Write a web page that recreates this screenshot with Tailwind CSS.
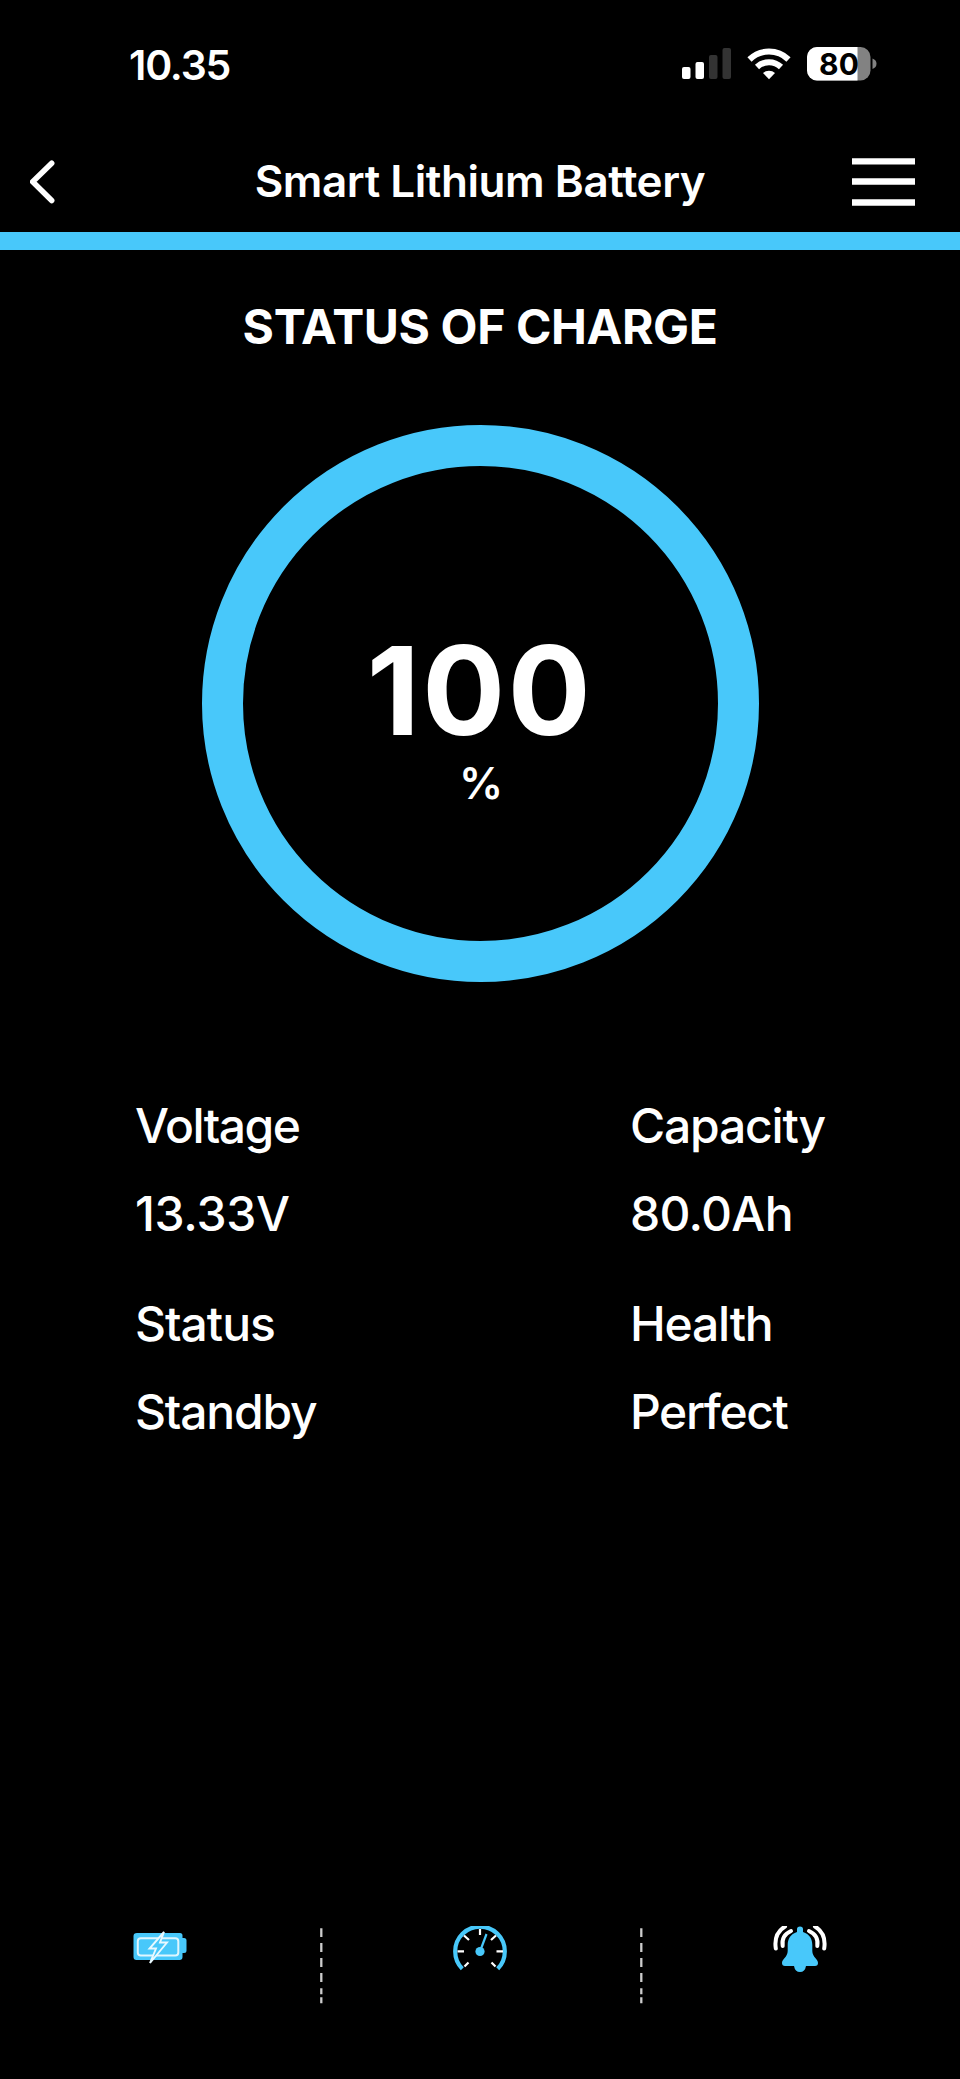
<!DOCTYPE html>
<html lang="en">
<head>
    <meta charset="UTF-8">
    <meta name="viewport" content="width=device-width, initial-scale=1.0">
    <title>Smart Lithium Battery</title>
    <!-- Tailwind CSS CDN -->
    <script src="https://cdn.jsdelivr.net/npm/@tailwindcss/browser@4"></script>
</head>
<body class="bg-black text-white font-['Inter',sans-serif]">
    <div class="flex flex-col w-[960px] h-[2079px] overflow-hidden">
        <!-- Status bar -->
        <div class="flex items-center justify-between h-32 pl-[129px] pr-[83px]">
            <span class="mt-0.5 text-[41px] leading-none font-semibold tracking-[-1.2px]">10.35</span>
            <div class="flex items-center">
                <svg class="w-[195px] h-9" viewBox="0 0 195 36">
                    <!-- Signal -->
                    <rect x="0" y="21" width="8.5" height="12" rx="2" fill="#fff"/>
                    <rect x="13.5" y="16" width="8.5" height="17" rx="2" fill="#fff"/>
                    <rect x="27" y="9" width="8.5" height="24" rx="2" fill="#333"/>
                    <rect x="40.5" y="2" width="8.5" height="31" rx="2" fill="#333"/>
                    <!-- Wifi -->
                    <g fill="none" stroke="#fff" stroke-width="6">
                        <path d="M67.5 13.5A28 28 0 0 1 106.5 13.5"/>
                        <path d="M75 21A17.5 17.5 0 0 1 99 21"/>
                    </g>
                    <path d="M81 27A9 9 0 0 1 93 27L87 33.3Z" fill="#fff"/>
                    <!-- Battery -->
                    <clipPath id="level"><rect x="125" y="1" width="63.5" height="33.5" rx="10"/></clipPath>
                    <g clip-path="url(#level)">
                        <rect x="125" y="0" width="65" height="36" fill="#828282"/>
                        <rect x="125" y="0" width="50.5" height="36" fill="#fff"/>
                    </g>
                    <path d="M190.5 12.5q4 1.5 4 5.2t-4 5.2Z" fill="#828282"/>
                    <text x="157" y="28.8" text-anchor="middle" font-size="30" font-weight="700" fill="#000">80</text>
                </svg>
            </div>
        </div>
        <!-- Header -->
        <header class="flex items-center justify-between h-[104px] pl-[30px] pr-[43px]">
            <svg class="w-[72px] h-11 mt-1" viewBox="0 0 72 44">
                <path d="M21.7 3.2L2.7 21.8L21.7 40.5" fill="none" stroke="#fff" stroke-width="5.5" stroke-linecap="round" stroke-linejoin="round"/>
            </svg>
            <h1 class="mt-0.5 ml-1.5 text-[44px] leading-none font-semibold tracking-[-0.45px] whitespace-nowrap">Smart Lithium Battery</h1>
            <svg class="w-[65px] h-12 mt-1" viewBox="0 0 65 48">
                <path d="M0 3.3H63M0 23.5H63M0 44.5H63" stroke="#fff" stroke-width="6.3"/>
            </svg>
        </header>
        <div class="h-[18px] bg-[#48c8fa]"></div>

        <main class="flex flex-col items-center">
            <h2 class="mt-[47px] text-[48px] leading-[60px] font-bold tracking-[-0.4px] whitespace-nowrap">STATUS OF CHARGE</h2>
            <!-- Charge level -->
            <div class="mt-[68px] size-[557px] rounded-full border-[41px] border-[#48c8fa] flex flex-col items-center pt-[164px]">
                <span class="text-[123px] leading-[122px] font-bold tracking-[2.5px]">100</span>
                <span class="mt-[3px] pl-0.5 text-[44px] leading-[56px] font-semibold">%</span>
            </div>
            <!-- Readings -->
            <dl class="mt-[100px] w-full pl-[135px] grid grid-cols-[495px_1fr] gap-y-[22px] text-[48px] leading-[88px] font-medium tracking-[-1.2px]">
                <div>
                    <dt class="tracking-[-1.5px]">Voltage</dt>
                    <dd class="tracking-[-0.3px]">13.33V</dd>
                </div>
                <div>
                    <dt>Capacity</dt>
                    <dd class="tracking-[-0.7px]">80.0Ah</dd>
                </div>
                <div>
                    <dt class="tracking-[-1px]">Status</dt>
                    <dd>Standby</dd>
                </div>
                <div>
                    <dt>Health</dt>
                    <dd class="tracking-[-1.4px]">Perfect</dd>
                </div>
            </dl>
        </main>

        <!-- Bottom tabs -->
        <nav class="mt-auto h-[153px] grid grid-cols-[320px_3px_317px_3px_317px]">
            <a class="flex justify-center pr-px" href="#">
                <svg class="w-[54px] h-12" viewBox="0 0 54 48">
                    <path d="M4 7h43q2.500 0 2.500 2.500V12h1.500q2.500 0 2.500 2.500v10q0 2.500-2.500 2.500h-1.500v4q0 3-3 3H3.500q-3 0-3-3V10q0-3 3.500-3Z" fill="#48c8fa"/>
                    <rect x="4.8" y="12.2" width="40.5" height="17.3" rx="3" fill="none" stroke="#dff6fe" stroke-width="2"/>
                    <path d="M31 6L16.5 22.5h6.500L17 37L34 16.500h-7Z" fill="#48c8fa" stroke="#e8f9ff" stroke-width="1.9"/>
                </svg>
            </a>
            <svg class="w-[3px] h-20" viewBox="0 0 3 80">
                <path d="M1.3 2.3v8.7M1.3 17v9M1.3 32v9M1.3 47v9M1.3 62.300v6M1.3 71.300v6" stroke="#ccc" stroke-width="2.3"/>
            </svg>
            <a class="flex justify-center pr-[3px]" href="#">
                <svg class="w-[54px] h-12" viewBox="0 0 54 48">
                    <path d="M9.3 42.8A24.8 24.8 0 1 1 44.7 42.8" fill="none" stroke="#48c8fa" stroke-width="4.2"/>
                    <path d="M27 3v6M4.5 25.300h6.500M43.5 25.300H50M11 9.500l5 4.500M43 9.500l-5 4.500M11.500 40.500l4-4M42.500 40.500l-4-4" stroke="#fff" stroke-width="2.2"/>
                    <circle cx="27" cy="25.5" r="4.6" fill="#48c8fa"/>
                    <path d="M27 25.5L33.5 8" stroke="#48c8fa" stroke-width="2.2"/>
                </svg>
            </a>
            <svg class="w-[3px] h-20" viewBox="0 0 3 80">
                <path d="M1.3 2.3v8.7M1.3 17v9M1.3 32v9M1.3 47v9M1.3 62.300v6M1.3 71.300v6" stroke="#ccc" stroke-width="2.3"/>
            </svg>
            <a class="flex justify-center pr-[3px]" href="#">
                <svg class="w-[54px] h-12" viewBox="0 0 54 48">
                    <path d="M24 6V3q0-2.500 3-2.500t3 2.500v3C36.500 8 39.300 13 39.300 19v6c0 6 5.700 8 5.700 12q0 3-3 3H33q-1 6-6 6t-6-6H12q-3 0-3-3c0-4 5.700-6 5.700-12v-6C14.700 13 17.500 8 24 6Z" fill="#48c8fa"/>
                    <g fill="none" stroke="#fff" stroke-width="4" stroke-linecap="round">
                        <path d="M18 5Q8 9.500 9.700 20"/>
                        <path d="M12 0.500Q0.500 7.500 2.800 22.500"/>
                        <path d="M36 5Q46 9.500 44.300 20"/>
                        <path d="M42 0.500Q53.500 7.500 51.200 22.500"/>
                    </g>
                </svg>
            </a>
        </nav>
    </div>
</body>
</html>
